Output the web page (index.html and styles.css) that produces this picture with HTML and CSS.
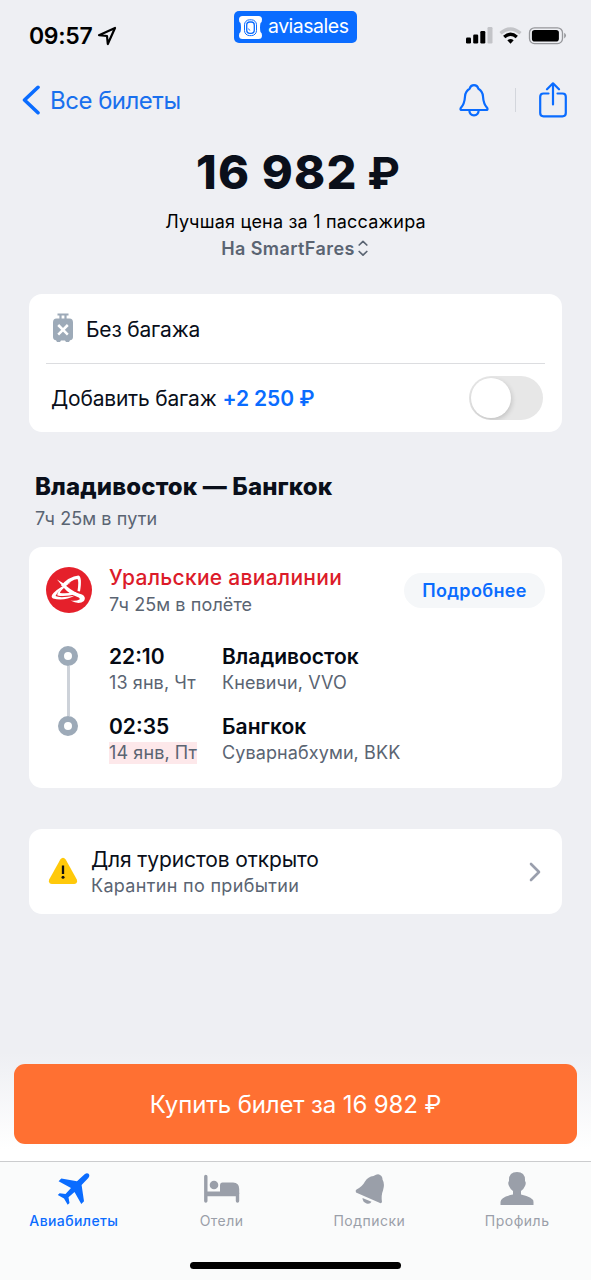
FILE: index.html
```html
<!DOCTYPE html>
<html lang="ru">
<head>
<meta charset="utf-8">
<title>Aviasales</title>
<link rel="stylesheet" href="styles.css">
</head>
<body>
<div class="screen">
  <header class="status">
    <div class="clock"><span class="time">09:57</span>
      <svg class="locate" width="20" height="20" viewBox="0 0 20 20"><path d="M2 9.200 18 2 10.800 18 10 10Z" fill="none" stroke="#000" stroke-width="2.200" stroke-linejoin="round"/></svg>
    </div>
    <div class="badge">
      <svg width="23" height="23" viewBox="0 0 23 23"><path d="M3.500 0H19.500Q23 0 23 3.500Q23 6.500 21.500 7Q20.500 11.500 21.500 16Q23 16.500 23 19.500Q23 23 19.500 23H3.500Q0 23 0 19.500Q0 16.500 1.500 16Q2.500 11.500 1.500 7Q0 6.500 0 3.500Q0 0 3.500 0Z" fill="#fff"/><rect x="5.500" y="3.800" width="12" height="15.800" rx="5" fill="#fff" stroke="#0a6cff" stroke-width="1"/><rect x="7.700" y="6" width="7.600" height="11.300" rx="3" fill="none" stroke="#0a6cff" stroke-width="1.300"/><path d="M9.300 12.500l1.500 2" stroke="#0a6cff"/></svg>
      <span class="brand">aviasales</span>
    </div>
    <svg class="signals" width="102" height="20" viewBox="0 0 102 20">
      <rect x="1" y="10.500" width="5" height="6" rx="1.200"/><rect x="8.200" y="7.500" width="5" height="9" rx="1.200"/><rect x="15.300" y="4" width="5" height="12.500" rx="1.200"/><rect x="22.500" y="0" width="5" height="16.500" rx="1.200" fill="#c3c4c8"/>
      <path d="M35.500 6.300Q45.500 -2.300 55.500 6.300" fill="none" stroke="#c3c4c8" stroke-width="3.300"/><path d="M39.200 10Q45.500 4.500 51.800 10" fill="none" stroke="#000" stroke-width="3.300"/><path d="M42.300 13.300Q45.500 10.800 48.700 13.300L45.500 16.800Z"/>
      <rect x="64.500" y="0.800" width="33" height="15.800" rx="5" fill="none" stroke="#96979b" stroke-width="1.300"/><rect x="66.900" y="3" width="27" height="11.500" rx="2.800"/><path d="M99.200 5.800Q102.800 8.500 99.200 11.500Z" fill="#96979b"/>
    </svg>
  </header>

  <nav class="nav">
    <a class="back"><svg width="20" height="30" viewBox="0 0 20 30"><path d="M17 2.300 3.500 15 17 27.700" fill="none" stroke="#0a6cff" stroke-width="3.600" stroke-linecap="round" stroke-linejoin="round"/></svg><span class="back-text">Все билеты</span></a>
    <div class="actions">
      <svg width="30" height="33" viewBox="0 0 30 33"><path d="M2.800 26Q1 26 1.600 24.300Q5.600 20 6 12.500Q6.500 7 10.600 4.800Q11.600 1.200 15 1.200Q18.400 1.200 19.400 4.800Q23.500 7 24 12.500Q24.400 20 28.400 24.300Q29 26 27.200 26Z" fill="none" stroke="#0a6cff" stroke-width="2.200" stroke-linejoin="round"/><path d="M10.300 26.300Q10.600 31.300 15 31.300Q19.400 31.300 19.700 26.300" fill="none" stroke="#0a6cff" stroke-width="2.200"/></svg>
      <i class="divider"></i>
      <svg width="28" height="36" viewBox="0 0 28 36"><path d="M9.500 11.500H4.500Q1.200 11.500 1.200 14.800V31Q1.200 34.300 4.500 34.300H23.500Q26.800 34.300 26.800 31V14.800Q26.800 11.500 23.500 11.500H18.500M14 22.500V1.500M8 7.300 14 1.300 20 7.300" fill="none" stroke="#0a6cff" stroke-width="2.200" stroke-linecap="round" stroke-linejoin="round"/></svg>
    </div>
  </nav>

  <section class="summary">
    <h1 class="price">16 982 <span class="ruble">₽</span></h1>
    <p class="best">Лучшая цена за 1 пассажира</p>
    <p class="agency"><span class="agency-name">На SmartFares</span><svg width="10" height="17" viewBox="0 0 10 17"><path d="M1.200 5 5 1.300 8.800 5M1.200 11.500 5 15.200 8.800 11.500" fill="none" stroke="#5a6472" stroke-width="1.700" stroke-linecap="round" stroke-linejoin="round"/></svg></p>
  </section>

  <section class="card baggage">
    <div class="row none">
      <svg width="22" height="30" viewBox="0 0 22 30"><path d="M5.500 1.500H16.500M8.500 1.500V6M13.500 1.500V6" stroke="#9daab8" stroke-width="2.200" fill="none"/><path d="M4.500 5.500H17.500Q21 5.500 21 9.500V24Q21 27 18 27.300L17 29H14L13 27.500H9L8 29H5L4 27.300Q1 27 1 24V9.500Q1 5.500 4.500 5.500Z" fill="#9daab8"/><path d="M6.200 12 15.800 21.600M15.800 12 6.200 21.600" stroke="#fff" stroke-width="2.500"/></svg>
      <span class="none-text">Без багажа</span>
    </div>
    <div class="row add">
      <span class="add-text">Добавить багаж</span><b class="add-price">+2 250 ₽</b>
      <span class="toggle"><i class="knob"></i></span>
    </div>
  </section>

  <section class="route">
    <h2 class="route-title">Владивосток — Бангкок</h2>
    <p class="route-time">7ч 25м в пути</p>
  </section>

  <section class="card flight">
    <div class="carrier">
      <svg width="46" height="46" viewBox="0 0 46 46"><circle cx="23" cy="23" r="23" fill="#e5202b"/><g fill="#fff"><path d="M11 12.500Q16 15 21 19.500Q28 25.500 36 27.500Q40.500 30 38 34Q33 38 24.500 33.500Q30 34.500 33.500 32.500Q34.500 31 31.500 30Q23 27 18 21Q14 16 11 12.500Z"/><path d="M15 18.500Q23 9.500 32.500 8.500Q36.500 10 34 24.500L31.500 24Q33 14 31.500 12Q25 12.500 18.500 20.500Z"/><path d="M25 15.500Q12 23 9.500 29Q14 31.500 29 28.500Q18 34.500 7 31.500Q4 29.500 7.500 26Q13 20 25 15.500Z"/><path d="M18.500 20.500Q14 24 14 26Q20 27 29.500 25L31 27Q19 30 11.500 28.500Q10 26 17 20Z"/></g></svg>
      <div class="carrier-info"><div class="carrier-name">Уральские авиалинии</div><div class="carrier-time">7ч 25м в полёте</div></div>
      <span class="more"><span class="more-text">Подробнее</span></span>
    </div>
    <div class="legs">
      <div class="track"><i class="stop"></i><i class="line"></i><i class="stop"></i></div>
      <div class="leg-list">
        <div class="leg"><div class="when"><b class="hour">22:10</b><span class="date">13 янв, Чт</span></div><div><b class="city">Владивосток</b><span class="port">Кневичи, VVO</span></div></div>
        <div class="leg"><div class="when"><b class="hour">02:35</b><span class="date late">14 янв, Пт</span></div><div><b class="city">Бангкок</b><span class="port">Суварнабхуми, BKK</span></div></div>
      </div>
    </div>
  </section>

  <section class="card notice">
    <svg class="warn" width="30" height="28" viewBox="0 0 30 28"><path d="M12.300 2.600Q15 -1 17.700 2.600L28.800 22.500Q30 26.500 26 27H4Q0 26.500 1.200 22.500Z" fill="#ffc90a"/><path d="M15 8.500V17" stroke="#111" stroke-width="2.300"/><circle cx="15" cy="20.300" r="1.500" fill="#111"/></svg>
    <div class="notice-info"><div class="notice-title">Для туристов открыто</div><div class="notice-sub">Карантин по прибытии</div></div>
    <svg width="12" height="20" viewBox="0 0 12 20"><path d="M2 2 10 10 2 18" fill="none" stroke="#9a9fad" stroke-width="2.600" stroke-linecap="round" stroke-linejoin="round"/></svg>
  </section>

  <div class="buy-area"><div class="buy"><span class="buy-text">Купить билет за 16 982 ₽</span></div></div>

  <footer class="tabs">
    <div class="tab-row">
      <div class="tab active"><svg width="36" height="36" viewBox="0 0 36 36"><path d="M28.600 3.200Q31 1.500 32.600 2.800Q34.200 4.500 32.300 7L25.600 14 28 30.200 25.300 33 18.500 21 12.500 26.300 13.500 32 11.700 33.800 8 27.500 1.800 24 3.600 22.300 9.500 23 15 17 2.600 10.200 5.300 7.500 21 10.300Z" fill="currentColor"/></svg><span>Авиабилеты</span></div>
      <div class="tab"><svg width="36" height="36" viewBox="0 0 36 36"><path d="M1.800 5.500V30M1.800 23.500H33.500V30" fill="none" stroke="currentColor" stroke-width="3.400" stroke-linecap="round"/><circle cx="10" cy="14" r="4.300" fill="currentColor"/><path d="M16 20.500V14.500Q16 11.500 18.500 11.500H29Q35.200 11.500 35.200 18V23H1.800V20.500Z" fill="currentColor"/></svg><span>Отели</span></div>
      <div class="tab"><svg width="36" height="36" viewBox="0 0 36 36"><path d="M5.500 18.500Q11 16 14 10.500Q17 5.500 22.500 5Q27 2 29 4Q31.500 5 31.500 8.500Q34 13 32 19.500Q30 24 31 31Q30.500 32.500 29 32L5 21.500Q4 19.500 5.500 18.500Z" fill="currentColor"/><path d="M11.500 27L20.500 30.800Q19 33.500 15.500 32.500Q11.500 31 11.500 27Z" fill="currentColor"/></svg><span>Подписки</span></div>
      <div class="tab"><svg width="36" height="36" viewBox="0 0 36 36"><path d="M10 10Q9.500 1 18 1Q26.500 1 26 10Q27.500 11.500 26 15Q24.500 18.500 22 20V23.500Q34.500 26 34.500 31V34H1.500V31Q1.500 26 14 23.500V20Q11.500 18.500 10 15Q8.500 11.500 10 10Z" fill="currentColor"/></svg><span>Профиль</span></div>
    </div>
    <i class="home"></i>
  </footer>
</div>
</body>
</html>
```
FILE: styles.css
```css
* { box-sizing: border-box; }
body, h1, h2, p { margin: 0; }
body { width: 591px; height: 1280px; background: #eeeff3; color: #0a0f1a; font-family: Inter, "Liberation Sans", sans-serif; font-size: 18px; overflow: hidden; }
span, b, .carrier-name, .notice-title { white-space: nowrap; }
svg { display: block; flex: none; }
.screen { height: 1280px; display: flex; flex-direction: column; }

.status { height: 70px; display: flex; justify-content: space-between; padding: 0 24px 0 29px; position: relative; }
.clock { display: flex; gap: 5px; height: 71px; align-items: center; color: #000; }
.time { font-size: 23px; font-weight: 600; letter-spacing: -.3px; }
.signals { margin-top: 27px; }
.badge { position: absolute; left: 234px; top: 11px; width: 123px; height: 32px; border-radius: 5px; background: #0a6cff; display: flex; align-items: center; gap: 6px; padding-left: 5px; color: #fff; }
.brand { font-size: 19.5px; line-height: 24px; margin-top: -2px; letter-spacing: -.5px; }

.nav { height: 60px; display: flex; align-items: center; justify-content: space-between; padding: 0 24px 0 21px; }
.back { display: flex; align-items: center; gap: 9px; color: #1970ee; font-size: 24px; }
.back-text { letter-spacing: -.5px; }
.actions { display: flex; align-items: center; }
.divider { width: 1px; height: 24px; background: #d3d6dc; margin: 0 23px 0 26px; }

.summary { height: 164px; padding-top: 12px; display: flex; flex-direction: column; align-items: center; }
.price { height: 60px; font-size: 47px; font-weight: 800; line-height: 60px; margin-left: 6px; white-space: nowrap; letter-spacing: 1.2px; }
.ruble { font-size: 44px; font-weight: 700; margin-left: -2px; }
.best { margin-top: 6px; line-height: 27px; color: #000; white-space: nowrap; letter-spacing: .2px; }
.agency { display: flex; align-items: center; gap: 3px; line-height: 27px; font-weight: 600; color: #5a6472; margin-left: -2px; }
.agency-name { letter-spacing: .4px; }

.card { margin: 0 29px; background: #fff; border-radius: 13px; flex: none; }
.baggage { height: 138px; padding: 0 17px; font-size: 21px; }
.row { display: flex; align-items: center; height: 69px; }
.none { height: 70px; border-bottom: 1px solid #dcdde0; padding-left: 6px; gap: 12px; }
.none svg { margin-top: -1px; }
.none-text, .add-text { letter-spacing: -.2px; }
.none-text { padding-top: 1px; }
.add { height: 68px; padding: 0 2px 0 5px; }
.add-price { color: #0a6cff; font-weight: 600; margin-left: 6px; letter-spacing: -.1px; }
.toggle { margin-left: auto; width: 74px; height: 44px; border-radius: 22px; background: #e7e7e7; padding: 2px; overflow: hidden; }
.knob { display: block; width: 40px; height: 40px; border-radius: 50%; background: #fff; box-shadow: 1px 2px 5px rgba(0,0,0,.16); }

.route { height: 115px; padding: 39px 35px 0; }
.route-title { font-size: 24px; line-height: 32px; font-weight: 800; white-space: nowrap; letter-spacing: .13px; }
.route-time { line-height: 32px; color: #5a6472; white-space: nowrap; letter-spacing: .1px; }

.flight { height: 241px; padding: 17px; }
.carrier { display: flex; align-items: center; height: 52px; }
.carrier-info { margin-left: 17px; padding-top: 1px; }
.carrier-name { font-size: 21px; line-height: 27px; font-weight: 500; color: #dc1b2a; letter-spacing: .28px; }
.carrier-time { line-height: 27px; color: #5a6472; white-space: nowrap; letter-spacing: .1px; }
.more { margin-left: auto; width: 141px; height: 35px; border-radius: 18px; background: #f5f7f9; color: #0a6cff; font-weight: 600; display: flex; align-items: center; justify-content: center; }
.more-text { letter-spacing: .35px; }
.legs { display: flex; margin-top: 26px; }
.track { width: 20px; margin: 4px 31px 0 12px; display: flex; flex-direction: column; align-items: center; height: 90px; }
.stop { width: 20px; height: 20px; border-radius: 50%; border: 6px solid #9daab8; background: #fff; flex: none; }
.line { width: 3px; flex: 1; background: #cdd2d9; }
.leg-list { padding-top: 1px; }
.leg { display: flex; height: 70px; }
.when { width: 113px; }
.hour, .city { display: block; font-size: 21px; line-height: 28px; font-weight: 600; color: #050a14; }
.date, .port { display: block; line-height: 22px; margin-top: 1px; color: #5a6472; width: max-content; letter-spacing: .1px; }
.late { background: #fde8ea; }

.notice { margin-top: 41px; height: 85px; display: flex; align-items: center; padding: 0 21px 0 19px; }
.warn { margin-top: -2px; }
.notice-info { margin: 1px auto 0 13px; }
.notice-title { font-size: 21px; line-height: 27px; letter-spacing: -.12px; }
.notice-sub { line-height: 25px; color: #5a6472; white-space: nowrap; letter-spacing: .32px; }

.buy-area { margin-top: auto; flex: none; height: 120px; padding: 23px 14px 16px; background: linear-gradient(#eeeff3 10%, #fff 90%); }
.buy { height: 80px; border-radius: 11px; background: #ff7032; display: flex; align-items: center; justify-content: center; color: #fff; font-size: 24px; letter-spacing: -.12px; }

.tabs { height: 119px; flex: none; background: #fafbfb; border-top: 1px solid #cbccce; }
.tab-row { display: grid; grid-template-columns: repeat(4, 1fr); padding-top: 9px; }
.tab { display: flex; flex-direction: column; align-items: center; color: #9a9fa9; font-size: 14px; line-height: 20px; font-weight: 400; letter-spacing: .5px; }
.tab svg { margin-bottom: 4px; }
.active { color: #0a6cff; font-weight: 500; letter-spacing: .4px; }
.home { display: block; width: 211px; height: 7px; border-radius: 4px; background: #000; margin: 31px auto 0; }
```
